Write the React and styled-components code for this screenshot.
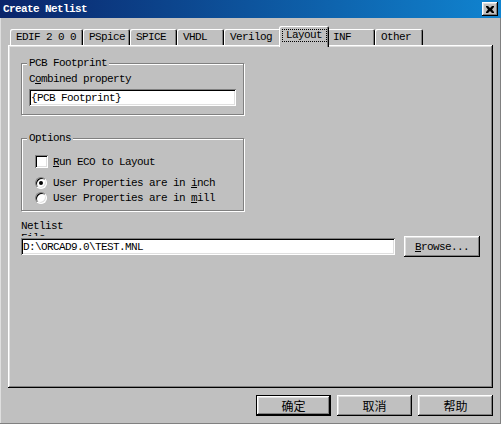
import styled, { createGlobalStyle, css } from "styled-components";

const GlobalStyle = createGlobalStyle`
  html, body {
    margin: 0;
    padding: 0;
    background: #c0c0c0;
  }
  body {
    font-family: "Liberation Mono", "Noto Sans CJK SC", monospace;
    font-size: 11px;
    letter-spacing: -0.6px;
    color: #000;
  }
`;

const raised = css`
  box-shadow: inset -1px -1px #000, inset 1px 1px #fff, inset -2px -2px #808080,
    inset 2px 2px #dfdfdf;
`;

const sunken = css`
  box-shadow: inset 1px 1px #808080, inset -1px -1px #fff, inset 2px 2px #000,
    inset -2px -2px #dfdfdf;
`;

const Window = styled.div`
  width: 501px;
  height: 424px;
  box-sizing: border-box;
  background: #c0c0c0;
  display: flex;
  flex-direction: column;
  overflow: hidden;
  box-shadow: inset -1px -1px #808080, inset 1px 0 #dfdfdf;
`;

const TitleBar = styled.div`
  height: 18px;
  display: flex;
  align-items: center;
  padding-left: 3px;
  background: linear-gradient(to right, #0a246a, #1084d0);
  color: #fff;
  font-weight: bold;
  line-height: 18px;
`;

const CloseButton = styled.div`
  width: 16px;
  height: 14px;
  margin-left: auto;
  margin-right: 3px;
  background: #c0c0c0;
  display: flex;
  align-items: center;
  justify-content: center;
  ${raised}
`;

const Body = styled.div`
  padding: 8px 8px 0;
  display: flex;
  flex-direction: column;
`;

const TabStrip = styled.div`
  height: 19px;
  display: flex;
  align-items: flex-end;
  padding-left: 2px;
`;

const Tab = styled.div`
  position: relative;
  box-sizing: border-box;
  width: ${(p) => p.$w}px;
  height: 16px;
  padding: 2px 0 0 6px;
  line-height: 12px;
  white-space: nowrap;
  background: #c0c0c0;
  border-radius: 2px 2px 0 0;
  box-shadow: inset 1px 1px #fff, inset -1px 0 #000, inset -2px 0 #808080;
  ${(p) =>
    p.$active &&
    css`
      width: ${p.$w + 4}px;
      height: 21px;
      margin: 0 -2px -2px;
      padding: 3px 0 0 3px;
      z-index: 1;
    `}
`;

const Focus = styled.span`
  display: inline-block;
  box-sizing: border-box;
  height: 13px;
  line-height: 11px;
  padding: 0 4px 0 3px;
  border: 1px dotted #000;
`;

const Panel = styled.div`
  box-sizing: border-box;
  width: 485px;
  height: 343px;
  padding: 12px 0 0 13px;
  display: flex;
  flex-direction: column;
  ${raised}
`;

const GroupBox = styled.fieldset`
  margin: ${(p) => p.$top || 0}px 0 0;
  width: 223px;
  box-sizing: border-box;
  padding: ${(p) => p.$pad};
  border: 1px solid #808080;
  box-shadow: inset 1px 1px #fff, 1px 1px #fff;
  display: flex;
  flex-direction: column;
`;

const Legend = styled.legend`
  padding: 0 2px;
  margin-left: -2px;
  line-height: 12px;
  background: #c0c0c0;
`;

const Caption = styled.div`
  line-height: 12px;
`;

const TextBox = styled.input`
  box-sizing: border-box;
  width: ${(p) => (p.$w ? `${p.$w}px` : "100%")};
  height: 17px;
  margin: ${(p) => p.$top || 0}px 0 0;
  padding: 0 2px;
  border: none;
  outline: none;
  background: #fff;
  font: inherit;
  letter-spacing: inherit;
  color: #000;
  ${sunken}
`;

const OptionRow = styled.label`
  display: flex;
  align-items: center;
  height: 13px;
  gap: ${(p) => p.$gap}px;
  margin-top: ${(p) => p.$top || 0}px;
  padding-left: 6px;
  line-height: 12px;
`;

const CheckBox = styled.span`
  width: 13px;
  height: 13px;
  background: #fff;
  flex: none;
  ${sunken}
`;

const Radio = styled.span`
  position: relative;
  width: 12px;
  height: 12px;
  box-sizing: border-box;
  flex: none;
  border-radius: 50%;
  background: #fff;
  border: 1px solid;
  border-color: #808080 #fff #fff #808080;
  box-shadow: inset 1px 1px #000, inset -1px -1px #dfdfdf;
  ${(p) =>
    p.$checked &&
    css`
      &::after {
        content: "";
        position: absolute;
        left: 3px;
        top: 3px;
        width: 4px;
        height: 4px;
        border-radius: 50%;
        background: #000;
      }
    `}
`;

const NetLabel = styled.div`
  height: 16px;
  margin-top: 9px;
  overflow: hidden;
  line-height: 12px;
`;

const FileRow = styled.div`
  display: flex;
  align-items: center;
  gap: 9px;
`;

const Button = styled.button`
  box-sizing: border-box;
  width: ${(p) => p.$w || 75}px;
  height: 21px;
  padding: 0;
  border: none;
  background: #c0c0c0;
  font: inherit;
  letter-spacing: inherit;
  color: #000;
  ${raised}
  ${(p) =>
    p.$default &&
    css`
      box-shadow: inset 0 0 0 1px #000, inset -2px -2px #000, inset 2px 2px #fff,
        inset -3px -3px #808080, inset 3px 3px #dfdfdf;
    `}
`;

const ButtonRow = styled.div`
  margin-top: 7px;
  display: flex;
  justify-content: flex-end;
  gap: 6px;
`;

const CnButton = styled(Button)`
  font-family: "Noto Sans CJK SC", sans-serif;
  font-size: 12px;
  letter-spacing: 0;
`;

const tabs = [
  { label: "EDIF 2 0 0", w: 73 },
  { label: "PSpice", w: 47 },
  { label: "SPICE", w: 47 },
  { label: "VHDL", w: 47 },
  { label: "Verilog", w: 57 },
  { label: "Layout", w: 46 },
  { label: "INF", w: 48 },
  { label: "Other", w: 48 },
];

export default function App() {
  return (
    <>
      <GlobalStyle />
      <Window>
        <TitleBar>
          Create Netlist
          <CloseButton>
            <svg width="8" height="7" viewBox="0 0 8 7">
              <path d="M0 0h2l2 2 2-2h2v1L6 3.5 8 6v1H6L4 5 2 7H0V6l2-2.5L0 1z" fill="#000" />
            </svg>
          </CloseButton>
        </TitleBar>
        <Body>
          <TabStrip>
            {tabs.map((t, i) => (
              <Tab key={t.label} $w={t.w} $active={i === 5}>
                {i === 5 ? <Focus>{t.label}</Focus> : t.label}
              </Tab>
            ))}
          </TabStrip>
          <Panel>
            <GroupBox $pad="4px 7px 8px">
              <Legend>PCB Footprint</Legend>
              <Caption>
                C<u>o</u>mbined property
              </Caption>
              <TextBox $top={4} readOnly defaultValue="{PCB Footprint}" />
            </GroupBox>
            <GroupBox $top={17} $pad="11px 7px 6px">
              <Legend>Options</Legend>
              <OptionRow $gap={5}>
                <CheckBox />
                <span>
                  <u>R</u>un ECO to Layout
                </span>
              </OptionRow>
              <OptionRow $gap={6} $top={8}>
                <Radio $checked />
                <span>
                  User Properties are in <u>i</u>nch
                </span>
              </OptionRow>
              <OptionRow $gap={6} $top={2}>
                <Radio />
                <span>
                  User Properties are in <u>m</u>ill
                </span>
              </OptionRow>
            </GroupBox>
            <NetLabel>
              Netlist
              <br />
              File
            </NetLabel>
            <FileRow>
              <TextBox $w={374} readOnly defaultValue="D:\ORCAD9.0\TEST.MNL" />
              <Button $w={76}>
                <u>B</u>rowse...
              </Button>
            </FileRow>
          </Panel>
          <ButtonRow>
            <CnButton $default>确定</CnButton>
            <CnButton>取消</CnButton>
            <CnButton>帮助</CnButton>
          </ButtonRow>
        </Body>
      </Window>
    </>
  );
}
